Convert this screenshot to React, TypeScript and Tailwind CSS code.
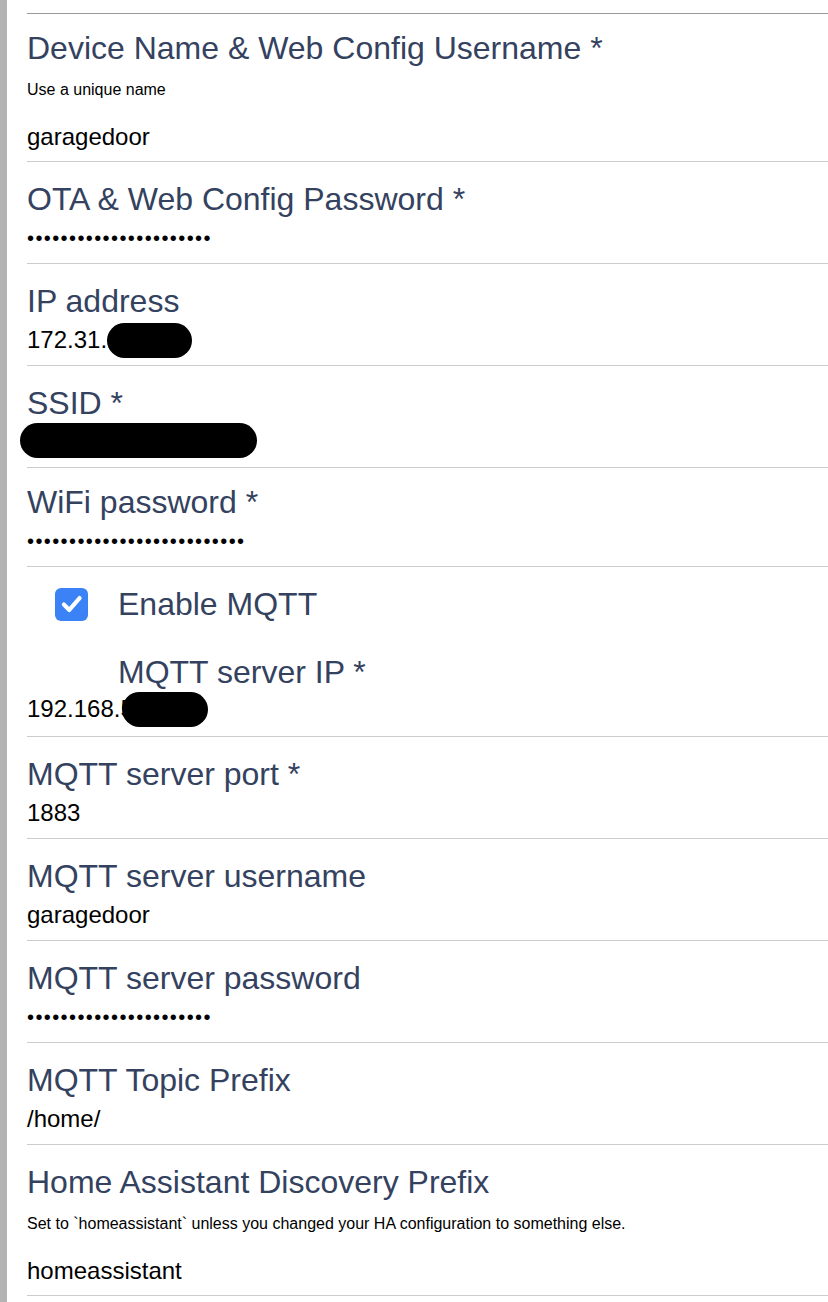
import React from "react";

const F = { fontFamily: '"Liberation Sans", Arial, Helvetica, sans-serif' };

function Label({ children }: { children: React.ReactNode }) {
  return <div className="text-[32px] leading-[36px] text-[#344260]">{children}</div>;
}

function Value({ children }: { children: React.ReactNode }) {
  return (
    <div className="flex h-[30px] items-center whitespace-nowrap text-[24px] leading-[30px] text-black">
      {children}
    </div>
  );
}

function Dots({ n }: { n: number }) {
  return (
    <div className="flex h-[30px] items-center whitespace-nowrap text-[20px] leading-[30px] tracking-[1.4px] text-black">
      {"•".repeat(n)}
    </div>
  );
}

function Help({ children }: { children: React.ReactNode }) {
  return <div className="text-[16px] leading-[20px] text-black">{children}</div>;
}

function Blob({ className }: { className: string }) {
  return <span className={"inline-block h-[35px] shrink-0 rounded-full bg-black " + className} />;
}

function Section({ label, children }: { label: string; children: React.ReactNode }) {
  return (
    <div className="border-b border-[#cccccc] pb-[10px] pt-[19px]">
      <Label>{label}</Label>
      <div className="mt-[6px]">{children}</div>
    </div>
  );
}

export default function App() {
  return (
    <div className="flex min-h-[1302px] w-full bg-white" style={F}>
      <div className="w-[7px] shrink-0 bg-[#b3b3b3]" />
      <div className="flex-1 pl-[20px]">
        <div className="mt-[13px] border-t border-[#999999]" />

        <div className="border-b border-[#cccccc] pb-[9px] pt-[16px]">
          <Label>Device Name &amp; Web Config Username *</Label>
          <div className="mt-[14px]">
            <Help>Use a unique name</Help>
          </div>
          <div className="mt-[22px]">
            <Value>garagedoor</Value>
          </div>
        </div>

        <Section label="OTA & Web Config Password *">
          <Dots n={22} />
        </Section>

        <Section label="IP address">
          <Value>
            172.31.
            <Blob className="w-[85px]" />
          </Value>
        </Section>

        <Section label="SSID *">
          <Value>
            <Blob className="relative -top-[2px] -ml-[7px] w-[237px]" />
          </Value>
        </Section>

        <div className="border-b border-[#cccccc] pb-[10px] pt-[16px]">
          <Label>WiFi password *</Label>
          <div className="mt-[6px]">
            <Dots n={26} />
          </div>
        </div>

        <div className="border-b border-[#cccccc] pb-[12px] pt-[19px]">
          <label className="flex h-[36px] items-center">
            <span className="ml-[28px] flex h-[33px] w-[33px] items-center justify-center rounded-[6px] bg-[#3a82f6]">
              <svg width="26" height="26" viewBox="0 0 24 24" fill="none">
                <path
                  d="M4.5 12.5 L9.5 17.5 L19 6.5"
                  stroke="white"
                  strokeWidth="3.8"
                  strokeLinecap="round"
                  strokeLinejoin="round"
                />
              </svg>
            </span>
            <span className="ml-[30px] text-[32px] leading-[36px] text-[#344260]">Enable MQTT</span>
          </label>
          <div className="mt-[32px] pl-[91px]">
            <Label>MQTT server IP *</Label>
          </div>
          <div className="mt-[4px]">
            <Value>
              192.168.5
              <Blob className="-ml-[12px] w-[86px]" />
            </Value>
          </div>
        </div>

        <Section label="MQTT server port *">
          <Value>1883</Value>
        </Section>

        <Section label="MQTT server username">
          <Value>garagedoor</Value>
        </Section>

        <Section label="MQTT server password">
          <Dots n={22} />
        </Section>

        <Section label="MQTT Topic Prefix">
          <Value>/home/</Value>
        </Section>

        <div className="border-b border-[#cccccc] pb-[9px] pt-[19px]">
          <Label>Home Assistant Discovery Prefix</Label>
          <div className="mt-[14px]">
            <Help>Set to `homeassistant` unless you changed your HA configuration to something else.</Help>
          </div>
          <div className="mt-[22px]">
            <Value>homeassistant</Value>
          </div>
        </div>
      </div>
    </div>
  );
}
